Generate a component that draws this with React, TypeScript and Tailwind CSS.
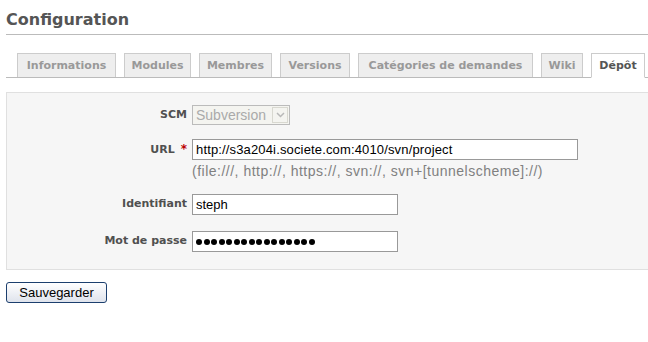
import { ReactNode } from "react";

const tabs = [
  { label: "Informations", w: "w-[99px]" },
  { label: "Modules", w: "w-[67px]" },
  { label: "Membres", w: "w-[73px]" },
  { label: "Versions", w: "w-[70px]" },
  { label: "Catégories de demandes", w: "w-[175px]" },
  { label: "Wiki", w: "w-[42px]" },
  { label: "Dépôt", w: "w-[54px]" },
];

function Tab({ label, w, selected }: { label: string; w: string; selected?: boolean }) {
  return (
    <div
      className={
        (selected
          ? "relative -mb-px h-[25px] border border-[#cccccc] border-b-white bg-white text-[#555555]"
          : "h-[24px] border border-b-0 border-[#cccccc] bg-[#eeeeee] text-[#999999]") +
        " " + w + " shrink-0 whitespace-nowrap text-center pt-[5px]"
      }
    >
      {label}
    </div>
  );
}

function Row({ label, required, children, className }: { label: string; required?: boolean; children: ReactNode; className?: string }) {
  return (
    <div className={"flex items-start " + (className ?? "")}>
      <div className="w-[185px] shrink-0 text-right pr-[5px] pt-[3px] font-bold text-[11px] leading-[14px] text-[#505050]">
        {label}
        {required && <span className="text-[#bb0000] ml-[6px] text-[12px]">*</span>}
      </div>
      <div>{children}</div>
    </div>
  );
}

export default function App() {
  return (
    <div className="w-[648px] h-[342px] bg-white overflow-hidden font-['DejaVu_Sans',Verdana,sans-serif]">
      <div className="pl-[6px] pt-[9px]">
        <h2 className="text-[16px] font-bold text-[#555555] leading-[21px] pb-[4px] border-b border-[#bbbbbb]">
          Configuration
        </h2>

        <div className="mt-[18px] flex items-end gap-[8px] pl-[11px] border-b border-[#bbbbbb] text-[11px] font-bold leading-[14px]">
          {tabs.map((t) => (
            <Tab key={t.label} label={t.label} w={t.w} selected={t.label === "Dépôt"} />
          ))}
        </div>

        <div className="mt-[14px] h-[178px] border border-r-0 border-[#e0e0e0] bg-[#f6f6f6] pt-[12px]">
          <Row label="SCM">
            <div className="flex items-center w-[98px] h-[20px] border border-[#bbbbbb] bg-[#f4f4f0] font-['Liberation_Sans',Arial,sans-serif] text-[14px] text-[#aaaaaa]">
              <span className="flex-1 pl-[3px]">Subversion</span>
              <span className="w-[16px] h-[16px] mr-[1px] border border-[#d8d8d0] flex items-center justify-center">
                <svg width="9" height="6" viewBox="0 0 9 6">
                  <path d="M1 1 L4.5 4.5 L8 1" fill="none" stroke="#b8b8b8" strokeWidth="1.5" />
                </svg>
              </span>
            </div>
          </Row>

          <Row label="URL" required className="mt-[14px]">
            <div className="w-[386px] h-[21px] border border-[#999999] bg-white pl-[3px] pt-[2px] font-['Liberation_Sans',Arial,sans-serif] text-[13px] leading-[15px] tracking-[0.15px] text-black">
              http://s3a204i.societe.com:4010/svn/project
            </div>
            <div className="mt-[4px] font-['Liberation_Sans',Arial,sans-serif] text-[14px] leading-[15px] tracking-[0.5px] text-[#808080]">
              (file:///, http://, https://, svn://, svn+[tunnelscheme]://)
            </div>
          </Row>

          <Row label="Identifiant" className="mt-[15px]">
            <div className="w-[206px] h-[21px] border border-[#999999] bg-white pl-[3px] pt-[2px] font-['Liberation_Sans',Arial,sans-serif] text-[13px] leading-[15px] text-black">
              steph
            </div>
          </Row>

          <Row label="Mot de passe" className="mt-[16px]">
            <div className="flex items-center gap-[1.5px] w-[206px] h-[21px] border border-[#999999] bg-white pl-[3px]">
              {Array.from({ length: 16 }).map((_, i) => (
                <span key={i} className="w-[6px] h-[6px] rounded-full bg-black" />
              ))}
            </div>
          </Row>
        </div>

        <button className="mt-[12px] w-[101px] h-[21px] rounded-[3px] border border-[#1c3f6e] bg-gradient-to-b from-white to-[#dfe3ec] font-['Liberation_Sans',Arial,sans-serif] text-[13px] leading-[15px] text-black">
          Sauvegarder
        </button>
      </div>
    </div>
  );
}
